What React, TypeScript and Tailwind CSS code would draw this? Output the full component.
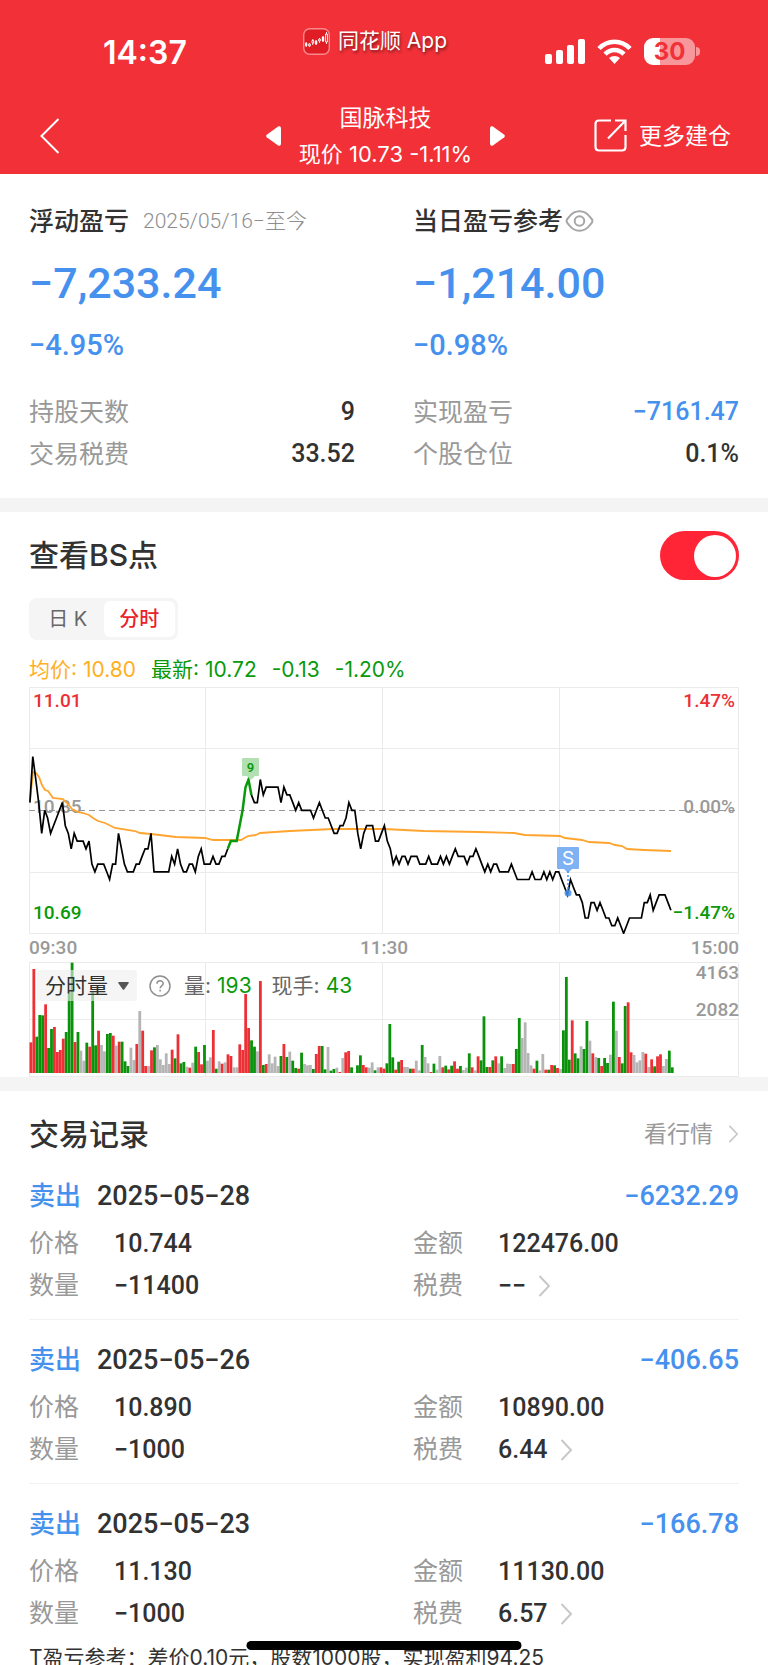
import { useState } from "react";

const DIN = "font-['Roboto','Noto_Sans_CJK_SC',sans-serif]";

// price of every minute, in ticks of 0.01 above or below the previous close
const PRICE_TICKS = [
  1, 7, 4, 1, -3, 0, -1, -3, -2, -1, 0, 1, -2, -3, -5, -3, -4, -4, -4, -5, -4, -7, -8, -7, -7, -7, -8, -9, -7, -7,
  -3, -5, -7, -8, -8, -8, -7, -7, -6, -5, -5, -3, -8, -8, -8, -8, -8, -8, -6, -7, -5, -7, -8, -8, -7, -7, -8, -6, -5, -7,
  -7, -7, -6, -7, -7, -6, -6, -5, -4, -4, -4, -2, 0, 3, 4, 2, 1, 1, 4, 2, 3, 3, 3, 3, 3, 1, 3, 2, 2, 1,
  0, 1, 0, 0, 0, 0, -1, 0, 1, 0, -1, -1, -2, -3, -3, -2, -2, -1, 1, 0, 0, -3, -5, -3, -2, -2, -2, -4, -4, -3,
  -2, -4, -5, -7, -6, -7, -6, -6, -7, -6, -6, -6, -7, -7, -7, -6, -7, -7, -7, -6, -7, -6, -7, -6, -5, -6, -6, -6, -7, -6,
  -6, -5, -6, -7, -8, -7, -8, -7, -7, -8, -8, -8, -8, -7, -8, -9, -9, -9, -9, -9, -8, -9, -9, -9, -8, -9, -8, -9, -8, -8,
  -9, -10, -11, -9, -10, -11, -11, -12, -14, -14, -12, -12, -13, -12, -13, -14, -14, -15, -15, -14, -15, -16, -15, -14, -14, -14, -14, -14, -12, -12,
  -11, -13, -12, -11, -11, -11, -12, -13,
];

const AVERAGE_LINE =
  "1,114 4,85 7,86 10,90 13,98 16,103 19,104 24,111 34,112 39,117 43,122 49,125 54,126 60,128 64,131 69,134 76,136 86,141 106,144 111,146 122,147 147,150 176,151 184,153 212,153 219,149 227,148 231,146 261,144 304,142 355,142 395,144 450,145 485,146 496,148 531,149 536,151 553,153 560,155 580,156 586,158 593,159 598,162 615,163 642,164";

// r = up, g = down, n = unchanged, followed by the relative volume
const VOLUMES =
  "r92 r312 g109 g174 g173 r206 g75 g132 r138 r63 r69 r103 g123 g242 g331 r93 g123 n67 n37 g91 r79 g245 g83 r127 n84 n65 g117 g120 r112 n82 " +
  "r94 g94 g35 g21 n76 n39 r87 n186 r127 r21 n21 r68 g77 n84 n41 n24 n59 n27 r70 g44 r116 g29 g33 n19 r16 n31 g79 r63 r26 g84 " +
  "n37 n47 r129 g13 n35 r28 n32 r56 r51 n17 n17 r86 r69 r237 r135 g98 g79 n65 r276 g24 r27 n56 n29 n49 n21 g51 r87 g48 n64 g37 " +
  "g15 r13 g61 n27 n23 n24 g12 r57 r81 g81 g11 n78 g7 g12 n16 r3 n45 r62 r66 g17 n1 g23 g53 r24 r17 n16 n32 g8 n17 r17 " +
  "r13 g29 g147 g47 r10 g34 r39 n18 n18 g13 r13 n37 n8 g84 n48 n29 r3 g28 n10 n51 r17 g22 r11 g22 r35 r13 g21 n9 n16 g59 " +
  "r17 n8 r50 g38 g170 g18 r18 g38 r50 n29 g50 n15 n28 n27 r27 g72 g165 n105 n152 n60 n23 r13 g37 n8 n57 r10 g10 r24 g23 r15 " +
  "n12 g128 g288 g40 r158 g59 g44 n80 g72 g156 n97 r59 n48 g45 r21 g45 g30 n55 g214 n127 r48 g29 g201 r212 r62 n54 n32 n38 n63 r58 " +
  "n18 r41 g20 r50 r56 n21 n42 g67 g17";

const BAR_COLORS: Record<string, string> = { r: "#ec3035", g: "#0a920a", n: "#b5b5b5" };

const MINUTE = 2.954;
const BAR_STEP = 2.942;

function pricePoints(from: number, to: number) {
  return PRICE_TICKS.slice(from, to)
    .map((t, i) => `${((from + i + 0.3) * MINUTE).toFixed(1)},${(123.3 - t * 7.69).toFixed(1)}`)
    .join(" ");
}

const records = [
  { date: "2025−05−28", profit: "−6232.29", price: "10.744", amount: "122476.00", count: "−11400", tax: "−−" },
  { date: "2025−05−26", profit: "−406.65", price: "10.890", amount: "10890.00", count: "−1000", tax: "6.44" },
  { date: "2025−05−23", profit: "−166.78", price: "11.130", amount: "11130.00", count: "−1000", tax: "6.57" },
];

function Chevron({ className }: { className: string }) {
  return (
    <svg className={className} viewBox="0 0 12 22" fill="none" stroke="#c8c8c8" strokeWidth="2">
      <path d="M1 1l9.500 10L1 21" />
    </svg>
  );
}

function StatusBar() {
  return (
    <div className="grid h-[94px] grid-cols-3 items-center text-white">
      <div className="mt-3 pl-[103px] text-[32px] leading-9 font-semibold">14:37</div>
      <div className="-mt-3 flex items-center justify-center gap-2 pr-[18px]">
        <svg className="h-[27px] w-[27px]" viewBox="0 0 27 27" fill="none">
          <rect x="0.700" y="0.700" width="25.600" height="25.600" rx="6" fill="#e01d24" stroke="#f8898d" strokeWidth="1.400" />
          <g stroke="#fff" strokeWidth="0.900">
            <path d="M3.200 14v5M6.500 15v4M9.800 11v6M13.100 12v5M16.500 10v5M20 8v6M23.500 4v12" />
            <path d="M2.500 15.500h1.400v2H2.500zM12.400 13h1.400v3h-1.400zM19.300 9h1.400v4h-1.400z" fill="#fff" />
            <path d="M5.700 16h1.600v2H5.700zM9 12.500h1.600v2.500H9zM15.700 11h1.600v2h-1.600zM22.600 6h1.800v8h-1.800z" fill="#e01d24" />
          </g>
        </svg>
        <span className="text-[21px] leading-8 whitespace-nowrap [text-shadow:1px_2px_3px_rgba(0,0,0,0.5)]">
          同花顺 App
        </span>
      </div>
      <div className="mt-2 flex items-center justify-end gap-3 pr-[68px]">
        <svg className="h-[25px] w-10" viewBox="0 0 40 25" fill="#fff">
          <rect x="0" y="15" width="7" height="10" rx="2" />
          <rect x="11" y="11" width="7" height="14" rx="2" />
          <rect x="22" y="6" width="7" height="19" rx="2" />
          <rect x="33" y="0" width="7" height="25" rx="2" />
        </svg>
        <svg className="h-[25px] w-[35px]" viewBox="0 0 35 25" fill="none" stroke="#fff" strokeWidth="4.600">
          <path d="M2 9.500C10.500 0.400 24.500 0.400 33 9.500" />
          <path d="M8 15.200C13.500 9.600 21.500 9.600 27 15.200" />
          <path d="M17.500 25l-5.500-6c3.200-2.800 7.800-2.800 11 0z" fill="#fff" stroke="none" />
        </svg>
        <div className="flex items-center gap-px">
          <div className="h-[27px] w-[51px] rounded-[9px] bg-[linear-gradient(90deg,#fff_32%,#f8979b_32%)] text-center text-[24px] leading-[27px] font-bold text-[#f23038]">
            30
          </div>
          <div className="h-[9px] w-[4px] rounded-r-full bg-[#f8979b]" />
        </div>
      </div>
    </div>
  );
}

function NavBar() {
  return (
    <nav className="grid h-20 grid-cols-[1fr_auto_1fr] items-center pt-[3px] pr-[37px] pl-10 text-white">
      <button type="button" aria-label="返回" className="w-5">
        <svg className="h-9 w-5" viewBox="0 0 20 36" fill="none" stroke="#fff" strokeWidth="2">
          <path d="M18.500 1L1.500 18l17 17" />
        </svg>
      </button>
      <div className="flex items-center gap-[18px]">
        <button type="button" aria-label="上一只">
          <svg className="h-5 w-[15px]" viewBox="0 0 15 20" fill="#fff">
            <path d="M12.500 0.300Q15 -0.300 15 2.500v15q0 2.800-2.500 2.200L0.700 11.200q-1-1.200 0-2.400z" />
          </svg>
        </button>
        <div className="text-center">
          <h1 className="text-[23px] leading-9">国脉科技</h1>
          <p className="text-[22px] leading-9">现价 10.73 -1.11%</p>
        </div>
        <button type="button" aria-label="下一只">
          <svg className="h-5 w-[15px]" viewBox="0 0 15 20" fill="#fff">
            <path d="M2.500 0.300Q0 -0.300 0 2.500v15q0 2.800 2.500 2.200L14.300 11.200q1-1.200 0-2.400z" />
          </svg>
        </button>
      </div>
      <button type="button" className="flex items-center gap-3 justify-self-end text-[23px] leading-9">
        <svg className="h-[33px] w-[33px]" viewBox="0 0 33 33" fill="none" stroke="#fff" strokeWidth="2.200">
          <path d="M17 1.500H5Q1.500 1.500 1.500 5v23q0 3.500 3.500 3.500h23q3.500 0 3.500-3.500V16" />
          <path d="M21 1.500h10.500V12M31.500 1.500L14 19.500" />
        </svg>
        更多建仓
      </button>
    </nav>
  );
}

function StatRow({ label, value, blue }: { label: string; value: string; blue?: boolean }) {
  return (
    <div className="flex justify-between text-[25px] leading-[42px]">
      <dt className="text-[#999]">{label}</dt>
      <dd className={`${DIN} font-medium ${blue ? "text-[#4691ee]" : "text-[#323232]"}`}>{value}</dd>
    </div>
  );
}

function Summary() {
  return (
    <section className="grid grid-cols-2 gap-x-[58px] px-[29px] pt-[29px] pb-[23px]">
      <div>
        <div className="flex items-center gap-[14px]">
          <h2 className="text-[25px] leading-9 font-medium whitespace-nowrap">浮动盈亏</h2>
          <span className={`${DIN} text-[21px] leading-9 font-light whitespace-nowrap text-[#8e8e8e]`}>
            2025/05/16−至今
          </span>
        </div>
        <p className={`${DIN} mt-4 text-[43px] leading-[56px] font-medium text-[#4691ee]`}>−7,233.24</p>
        <p className={`${DIN} mt-4 text-[29px] leading-9 font-medium text-[#4691ee]`}>−4.95%</p>
        <dl className="mt-7">
          <StatRow label="持股天数" value="9" />
          <StatRow label="交易税费" value="33.52" />
        </dl>
      </div>
      <div>
        <div className="flex items-center gap-[2px]">
          <h2 className="text-[25px] leading-9 font-medium whitespace-nowrap">当日盈亏参考</h2>
          <button type="button" aria-label="隐藏金额">
            <svg className="h-[22px] w-[29px]" viewBox="0 0 29 22" fill="none" stroke="#a6a6a6" strokeWidth="2">
              <path d="M1.500 11Q1.500 9.500 4 7C9.500-0.600 19.500-0.600 25 7q2.500 2.500 2.500 4t-2.500 4C19.500 22.600 9.500 22.600 4 15q-2.500-2.500-2.500-4z" />
              <circle cx="14.500" cy="11" r="4.800" />
            </svg>
          </button>
        </div>
        <p className={`${DIN} mt-4 text-[43px] leading-[56px] font-medium text-[#4691ee]`}>−1,214.00</p>
        <p className={`${DIN} mt-4 text-[29px] leading-9 font-medium text-[#4691ee]`}>−0.98%</p>
        <dl className="mt-7">
          <StatRow label="实现盈亏" value="−7161.47" blue />
          <StatRow label="个股仓位" value="0.1%" />
        </dl>
      </div>
    </section>
  );
}

function PriceChart() {
  return (
    <div className="relative mt-[2px]">
      <svg className="block w-full" viewBox="0 0 710 247" fill="none">
        <path
          d="M0.500 0.500h709v246H0.500zM0.500 61.500h709M0.500 185.500h709M176.500 0v247M353.500 0v247M530.500 0v247"
          stroke="#ebebeb"
        />
        <path d="M0 123.500h710" stroke="#999" strokeWidth="1.200" strokeDasharray="6 4" />
      </svg>
      <div
        className={`${DIN} absolute inset-0 flex justify-between px-1 pb-[7px] text-[19px] leading-7 font-medium text-[#999]`}
      >
        <div className="flex flex-col justify-between">
          <span className="text-[#ec3035]">11.01</span>
          <span>10.85</span>
          <span className="text-[#0a990a]">10.69</span>
        </div>
        <div className="flex flex-col justify-between text-right">
          <span className="text-[#ec3035]">1.47%</span>
          <span>0.00%</span>
          <span className="text-[#0a990a]">−1.47%</span>
        </div>
      </div>
      <svg className="absolute inset-0 w-full" viewBox="0 0 710 247" fill="none">
        <polyline points={AVERAGE_LINE} stroke="#ffa42e" strokeWidth="1.800" />
        <polyline points={pricePoints(0, 68)} stroke="#000" strokeWidth="1.700" />
        <polyline points={pricePoints(75, 218)} stroke="#000" strokeWidth="1.700" />
        <polyline points={pricePoints(67, 76)} stroke="#0a990a" strokeWidth="2.500" />
        <rect x="213" y="71" width="17" height="18" rx="1" fill="#b3e0b3" />
        <path d="M218 89h8l-4 4z" fill="#b3e0b3" />
        <text x="221.500" y="84.500" textAnchor="middle" fontFamily="Roboto" fontSize="13" fontWeight="600" fill="#0a990a">
          9
        </text>
        <rect x="528" y="160" width="22" height="22" rx="1" fill="#7fb2f3" />
        <path d="M535 182h8l-4 4z" fill="#7fb2f3" />
        <path d="M539 184v19" stroke="#4691ee" strokeWidth="1.500" strokeDasharray="2 2" />
        <circle cx="539" cy="206" r="3.500" fill="#4691ee" fillOpacity="0.850" />
        <text x="539" y="178" textAnchor="middle" fontFamily="Inter" fontSize="19" fill="#fff">
          S
        </text>
      </svg>
    </div>
  );
}

function VolumeChart() {
  return (
    <div className="relative">
      <svg className="block w-full" viewBox="0 0 710 115" fill="none">
        <path d="M0.500 0.500h709v114H0.500zM0.500 57.500h709M176.500 0v115M353.500 0v115M530.500 0v115" stroke="#ebebeb" />
        {VOLUMES.split(" ").map((bar, i) => {
          const h = Number(bar.slice(1)) / 3;
          return (
            <rect key={i} x={0.5 + i * BAR_STEP} y={111 - h} width="2.800" height={h} fill={BAR_COLORS[bar[0]]} />
          );
        })}
      </svg>
      <div className="absolute inset-x-0 top-0 flex items-start justify-between pl-2">
        <div className="mt-2 flex items-center text-[21px] leading-[31px] text-[#666]">
          <div className="relative">
            <select
              aria-label="指标"
              className="h-[31px] w-[100px] appearance-none rounded-[3px] bg-[#eeeeee]/60 pl-2 text-[21px] leading-[31px] text-[#323232]"
            >
              <option>分时量</option>
            </select>
            <svg className="pointer-events-none absolute top-3 right-2 h-2 w-[11px]" viewBox="0 0 11 8" fill="#555">
              <path d="M1 0h9q1.200 0.300 0.600 1.300L6.200 7.400q-0.700 0.700-1.400 0L0.400 1.300Q-0.200 0.300 1 0z" />
            </svg>
          </div>
          <button type="button" aria-label="说明" className="ml-3">
            <svg className="h-[22px] w-[22px]" viewBox="0 0 22 22" fill="none" stroke="#8e8e8e" strokeWidth="1.500">
              <circle cx="11" cy="11" r="10" />
              <path d="M8 8.800c0-4 6.200-4 6.200-0.200 0 2.200-3.100 2.300-3.100 4.700M11.100 14.800v1.700" />
            </svg>
          </button>
          <span className="ml-[13px]">量:</span>
          <span className="ml-[6px] text-[#0a990a]">193</span>
          <span className="ml-5">现手:</span>
          <span className="ml-[6px] text-[#0a990a]">43</span>
        </div>
        <div className={`${DIN} flex flex-col gap-[15px] text-[19px] leading-[22px] font-medium text-[#999]`}>
          <span>4163</span>
          <span>2082</span>
        </div>
      </div>
    </div>
  );
}

function BsSection() {
  const [showBs, setShowBs] = useState(true);
  const [tab, setTab] = useState("minute");

  return (
    <section className="px-[29px] pt-[19px]">
      <div className="flex items-center justify-between">
        <h2 className="text-[30px] leading-[49px] font-medium">查看BS点</h2>
        <label className="flex h-[49px] w-[79px] cursor-pointer items-center justify-end rounded-full bg-[#d8d8d8] px-[3px] has-checked:bg-[#ff2436]">
          <input
            type="checkbox"
            role="switch"
            aria-label="查看BS点"
            className="peer sr-only"
            checked={showBs}
            onChange={(e) => setShowBs(e.target.checked)}
          />
          <span className="mr-auto h-[42px] w-[42px] rounded-full bg-white peer-checked:mr-0" />
        </label>
      </div>
      <div className="mt-[18px] flex h-[42px] w-[149px] rounded-lg bg-[#f5f5f5] p-[3px] text-[20px]">
        <button
          type="button"
          onClick={() => setTab("day")}
          className={`flex-1 rounded-md ${tab === "day" ? "bg-white font-medium text-[#ec2028]" : "text-[#666]"}`}
        >
          日 K
        </button>
        <button
          type="button"
          onClick={() => setTab("minute")}
          className={`flex-1 rounded-md ${tab === "minute" ? "bg-white font-medium text-[#ec2028]" : "text-[#666]"}`}
        >
          分时
        </button>
      </div>
      <div className="mt-[15px] flex gap-[15px] text-[21px] leading-[30px] text-[#0a990a]">
        <span className="text-[#ffb01f]">均价: 10.80</span>
        <span>最新: 10.72</span>
        <span>-0.13</span>
        <span>-1.20%</span>
      </div>
      <PriceChart />
      <div className={`${DIN} flex justify-between text-[19px] leading-7 font-medium text-[#999]`}>
        <span>09:30</span>
        <span>11:30</span>
        <span>15:00</span>
      </div>
      <VolumeChart />
    </section>
  );
}

function Records() {
  return (
    <section className="px-[29px] pt-[21px]">
      <div className="flex items-center justify-between">
        <h2 className="text-[30px] leading-[44px] font-medium">交易记录</h2>
        <a href="#quote" className="flex items-center gap-[15px] text-[23px] text-[#999]">
          看行情
          <Chevron className="h-[18px] w-[11px]" />
        </a>
      </div>
      {records.map((r) => (
        <article
          key={r.date}
          className="border-b border-[#f2f2f2] pt-[22px] pb-3 last-of-type:border-0 last-of-type:pb-2"
        >
          <div className="flex text-[27px] leading-9 font-medium">
            <span className="text-[26px] text-[#4691ee]">卖出</span>
            <span className={`${DIN} ml-4`}>{r.date}</span>
            <span className={`${DIN} ml-auto text-[#4691ee]`}>{r.profit}</span>
          </div>
          <div className={`${DIN} mt-[9px] grid grid-cols-2 gap-x-[58px] text-[25px] leading-[42px] font-medium`}>
            <dl className="grid grid-cols-[85px_1fr]">
              <dt className="font-normal text-[#999]">价格</dt>
              <dd>{r.price}</dd>
              <dt className="font-normal text-[#999]">数量</dt>
              <dd>{r.count}</dd>
            </dl>
            <dl className="grid grid-cols-[85px_1fr]">
              <dt className="font-normal text-[#999]">金额</dt>
              <dd>{r.amount}</dd>
              <dt className="font-normal text-[#999]">税费</dt>
              <dd>
                <button type="button" className="flex items-center gap-3">
                  {r.tax}
                  <Chevron className="h-[22px] w-[13px]" />
                </button>
              </dd>
            </dl>
          </div>
        </article>
      ))}
      <p className="text-[21px] leading-[30px] whitespace-nowrap">
        T盈亏参考：差价0.10元，股数1000股，实现盈利94.25
      </p>
    </section>
  );
}

export default function App() {
  return (
    <div className="relative h-screen overflow-hidden bg-white font-['Inter','Noto_Sans_CJK_SC',sans-serif] text-[#323232]">
      <header className="bg-[#f23038]">
        <StatusBar />
        <NavBar />
      </header>
      <main>
        <Summary />
        <div className="h-[14px] bg-[#f4f4f4]" />
        <BsSection />
        <div className="h-[14px] bg-[#f4f4f4]" />
        <Records />
      </main>
      <div className="absolute bottom-[15px] left-1/2 h-[9px] w-[275px] -translate-x-1/2 rounded-full bg-black" />
    </div>
  );
}
